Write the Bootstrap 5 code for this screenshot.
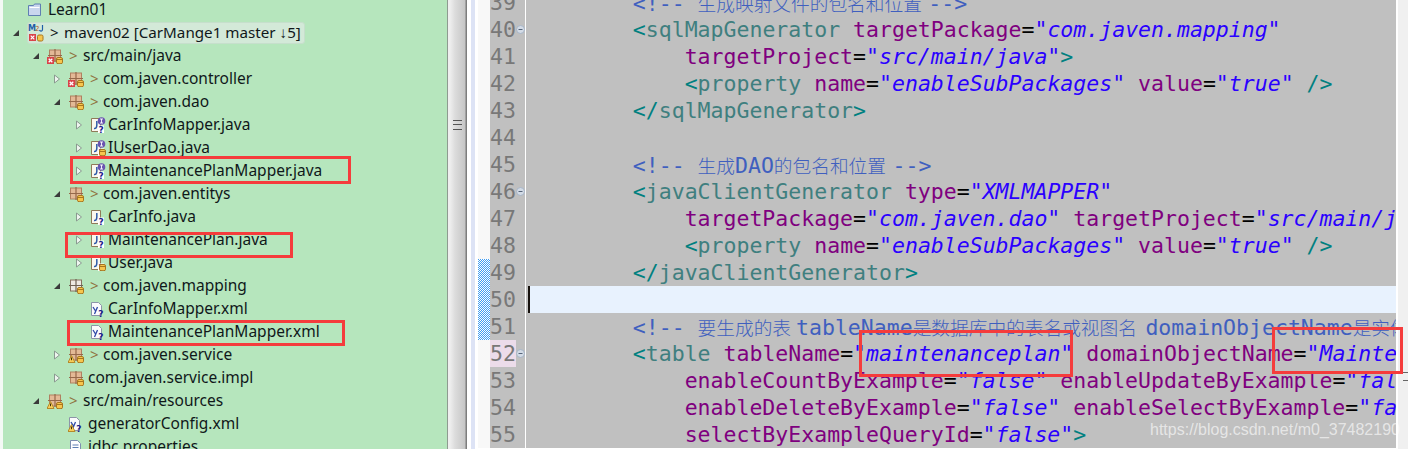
<!DOCTYPE html>
<html lang="en"><head><meta charset="utf-8"><title>Eclipse</title>
<link href="https://cdn.jsdelivr.net/npm/bootstrap@5.3.0/dist/css/bootstrap.min.css" rel="stylesheet">
<style>
html,body{height:449px;overflow:hidden;background:#fff}
.stage{width:1408px;height:449px;overflow:hidden;position:relative}
.tree{width:447px;height:449px;background:#b6e6bd;border-left:3px solid #f4f9f5;overflow:hidden;flex:none;font:15.5px/23px "Noto Sans","Open Sans",sans-serif;color:#10181a}
.tree-in{margin-top:-2px}
.trow{height:23px;white-space:nowrap}
.l1{padding-left:9px}.l2{padding-left:29px}.l3{padding-left:50px}.l4{padding-left:72px}
.arw{width:15px;flex:none;height:23px}
.ico{width:16px;height:16px;flex:none}
.lbl{margin-left:4px}
.l1 .lbl{margin-left:5px}
.l4 .lbl{margin-left:2px}
.dec+.lbl{margin-left:0}
.l2 .dec+.lbl{margin-left:1px}
.dec{color:#8f7340;width:13px;margin-left:6px;flex:none;font-size:15px}
.hl{background:#d3e9d8;border:1px solid #c6dfcc;border-radius:3px;height:22px;padding-right:3px;font-size:15.2px}
.hl .dec{color:#10181a;margin-left:5px;width:14px}
.split{width:20px;flex:none;background:linear-gradient(90deg,#8e9a90 0 1px,#eeeeee 1px 3px,#dcdcdc 8px,#c6c6c6 18px,#7d7d7d 19px);position:relative}
.grip{position:absolute;left:6px;top:120px;width:9px;height:10px;border-top:1px solid #555;border-bottom:1px solid #555}
.grip::after{content:"";position:absolute;left:0;right:0;top:3px;height:2px;border-top:1px solid #555}
.ruler{width:11px;flex:none;background:linear-gradient(90deg,#fff 0 4px,#dde3f5 4px 8px,#fff 8px)}
.lines{margin-top:-11px;width:918px;flex:none;font:21.52px/27px "DejaVu Sans Mono",monospace}
.lrow{height:27px}
.dif{width:12px;flex:none;background:#f8f8f8}
.dif svg{display:block}
.lnum{width:26px;flex:none;background:#c0c0c0;color:#787878;text-align:right;padding-right:1px}
.lnum.bp{background:#ecdcea}
.fold{width:9px;flex:none;background:#c0c0c0;padding-top:9px}
.fold svg{display:block}
.code{flex:1 1 auto;min-width:0;background:#c0c0c0;border-left:1px solid #fff;padding-left:2px;overflow:hidden}
.txt{height:27px;padding-left:1.2px;white-space:pre}
.txt.cur{background:#e8f2fe;border-left:2px solid #15100c}
.t{color:#3f7f7f}.b{color:#008080}.a{color:#7f007f}.v{color:#2a00ff;font-style:italic}.e{color:#000}.c{color:#3f5fbf}
.z{font-family:"Noto Sans CJK SC",sans-serif;font-size:18.7px;font-weight:300}
.sp{display:inline-block;width:6.5px}
.sp5{display:inline-block;width:5px}
.sp8{display:inline-block;width:8.5px}
.bar{width:12px;flex:none;background:linear-gradient(90deg,#fff 0 2px,#f0f0f0 2px);position:relative}
.rgrip{position:absolute;right:0;top:372px;width:5px;height:9px;border-top:1px solid #666;border-bottom:1px solid #666}
.rbox{position:absolute;border:3px solid #f53c3c}
.wm{position:absolute;left:1150px;top:420px;font:16px/20px "Liberation Sans",sans-serif;color:rgba(255,255,255,.62);white-space:nowrap}
</style></head><body>
<svg width="0" height="0" class="d-block" aria-hidden="true"><defs>
<pattern id="chk" width="2" height="2" patternUnits="userSpaceOnUse"><rect width="2" height="2" fill="#fff"/><rect width="1" height="1" fill="#3f9cf2"/><rect x="1" y="1" width="1" height="1" fill="#3f9cf2"/></pattern>
<pattern id="chk2" width="2" height="2" patternUnits="userSpaceOnUse"><rect width="2" height="2" fill="#fff"/><rect x="1" width="1" height="1" fill="#3f9cf2"/><rect y="1" width="1" height="1" fill="#3f9cf2"/></pattern>
<symbol id="aopen" viewBox="0 0 8 8"><path d="M1 7H7V1Z" fill="#3a3a3a"/></symbol>
<symbol id="aclosed" viewBox="0 0 8 10"><path d="M1.5 1L6.5 5L1.5 9Z" fill="#eef5ef" stroke="#8a9a90"/></symbol>
<symbol id="folder" viewBox="0 0 16 16"><path d="M1.5 3.5H6.5L7.5 2H13.5V13.5H1.5Z" fill="#c9d6ee" stroke="#5f7fb2"/><path d="M2.5 5.5H12.5" stroke="#fff"/></symbol>
<symbol id="pk" viewBox="0 0 16 16"><rect x="2.5" y="2" width="11" height="11" fill="#e3b996" stroke="#b08060"/><path d="M8 1V14M1 7.5H15" stroke="#96684a" stroke-width="1.2"/></symbol>
<symbol id="pkw" viewBox="0 0 16 16"><rect x="2.5" y="2" width="11" height="11" fill="#eee9e2" stroke="#85715f"/><path d="M8 1V14M1 7.5H15" stroke="#706255" stroke-width="1.2"/></symbol>
<symbol id="jar" viewBox="0 0 16 16"><rect x="9.5" y="9.5" width="6" height="6.2" rx="1.5" fill="#f6c64e" stroke="#a8761d"/><path d="M10 11.5H15" stroke="#a8761d"/></symbol>
<symbol id="xx" viewBox="0 0 16 16"><rect x="0" y="9" width="7" height="7" fill="#d9434a"/><path d="M1.7 10.7L5.3 14.3M5.3 10.7L1.7 14.3" stroke="#fff" stroke-width="1.3"/></symbol>
<symbol id="warn" viewBox="0 0 16 16"><path d="M3.5 8.5L7 15.5H0Z" fill="#f7cd5a" stroke="#b58a2a"/><path d="M3.5 10.5V13.2" stroke="#40300a"/></symbol>
<symbol id="jf" viewBox="0 0 16 16"><path d="M1.5 1.5H10.5V14.5H1.5Z" fill="#fbf8ef" stroke="#8f7a58"/><path d="M6.8 4C7 9 7 12 4 11.5" fill="none" stroke="#2e5aa8" stroke-width="1.5"/><rect x="8" y="8.5" width="6" height="7.5" fill="#fff"/><text x="8.4" y="15.5" font-size="9" font-weight="700" font-family="DejaVu Sans" fill="#1d1d8c">?</text></symbol>
<symbol id="inf" viewBox="0 0 16 16"><circle cx="11.5" cy="4" r="3.8" fill="#6a55b0"/><path d="M11.5 2V6M10 2H13M10 6H13" stroke="#fff" stroke-width=".9"/></symbol>
<symbol id="xf" viewBox="0 0 16 16"><path d="M1.5 1.5H8.5L11.5 4.5V14.5H1.5Z" fill="#fbfbfd" stroke="#8c94a8"/><path d="M3 6L5.5 10M7.5 6L4.5 13" fill="none" stroke="#2e4aa8" stroke-width="1.3"/><text x="8.2" y="15.5" font-size="9" font-weight="700" font-family="DejaVu Sans" fill="#1d1d8c">?</text></symbol>
<symbol id="mav" viewBox="0 0 17 18"><text x="0" y="7" font-size="8" font-weight="700" font-family="DejaVu Sans" fill="#1f5fa8">M</text><text x="7" y="7" font-size="7" font-family="DejaVu Sans" fill="#b05a2a">2</text><path d="M14.5 1V5.5C14.5 7.5 12 7.5 11.5 6" fill="none" stroke="#1f5fa8" stroke-width="1.2"/><rect x="1" y="10" width="7" height="7" fill="#d9434a"/><path d="M2.7 11.7L6.3 15.3M6.3 11.7L2.7 15.3" stroke="#fff" stroke-width="1.2"/><rect x="9.5" y="11" width="5.5" height="6" rx="1.4" fill="#f6c64e" stroke="#a8761d"/></symbol>
<symbol id="prop" viewBox="0 0 16 16"><path d="M2.5 1.5H9.5L12.5 4.5V14.5H2.5Z" fill="#fff" stroke="#7d8fb0"/><path d="M4.5 6H10.5M4.5 8.5H10.5M4.5 11H10.5" stroke="#5f7fb2"/></symbol>
<symbol id="fd" viewBox="0 0 9 9"><circle cx="4.5" cy="4.5" r="4" fill="#d3dbe6" stroke="#a7b4c6"/><path d="M2.5 4.5H6.5" stroke="#56657a"/></symbol>
</defs></svg>
<div class="stage d-flex">
<nav class="tree"><div class="tree-in">
<div class="trow d-flex align-items-center l1"><span class="arw"></span><svg class="ico"><use href="#folder"/></svg><span class="lbl">Learn01</span></div>
<div class="trow d-flex align-items-center l1"><span class="arw d-flex align-items-center"><svg width="8" height="8"><use href="#aopen"/></svg></span><span class="hl d-flex align-items-center"><svg width="17" height="18" class="flex-shrink-0"><use href="#mav"/></svg><span class="dec">&gt;</span>maven02 [CarMange1 master ↓5]</span></div>
<div class="trow d-flex align-items-center l2"><span class="arw d-flex align-items-center"><svg width="8" height="8"><use href="#aopen"/></svg></span><svg class="ico"><use href="#pk"/><use href="#xx"/><use href="#jar"/></svg><span class="dec">&gt;</span><span class="lbl">src/main/java</span></div>
<div class="trow d-flex align-items-center l3"><span class="arw d-flex align-items-center"><svg width="8" height="10"><use href="#aclosed"/></svg></span><svg class="ico"><use href="#pk"/><use href="#xx"/><use href="#jar"/></svg><span class="dec">&gt;</span><span class="lbl">com.javen.controller</span></div>
<div class="trow d-flex align-items-center l3"><span class="arw d-flex align-items-center"><svg width="8" height="8"><use href="#aopen"/></svg></span><svg class="ico"><use href="#pk"/><use href="#jar"/></svg><span class="dec">&gt;</span><span class="lbl">com.javen.dao</span></div>
<div class="trow d-flex align-items-center l4"><span class="arw d-flex align-items-center"><svg width="8" height="10"><use href="#aclosed"/></svg></span><svg class="ico"><use href="#jf"/><use href="#inf"/></svg><span class="lbl">CarInfoMapper.java</span></div>
<div class="trow d-flex align-items-center l4"><span class="arw d-flex align-items-center"><svg width="8" height="10"><use href="#aclosed"/></svg></span><svg class="ico"><use href="#jf"/><use href="#inf"/><use href="#jar"/></svg><span class="lbl">IUserDao.java</span></div>
<div class="trow d-flex align-items-center l4"><span class="arw d-flex align-items-center"><svg width="8" height="10"><use href="#aclosed"/></svg></span><svg class="ico"><use href="#jf"/><use href="#inf"/></svg><span class="lbl">MaintenancePlanMapper.java</span></div>
<div class="trow d-flex align-items-center l3"><span class="arw d-flex align-items-center"><svg width="8" height="8"><use href="#aopen"/></svg></span><svg class="ico"><use href="#pk"/><use href="#jar"/></svg><span class="dec">&gt;</span><span class="lbl">com.javen.entitys</span></div>
<div class="trow d-flex align-items-center l4"><span class="arw d-flex align-items-center"><svg width="8" height="10"><use href="#aclosed"/></svg></span><svg class="ico"><use href="#jf"/></svg><span class="lbl">CarInfo.java</span></div>
<div class="trow d-flex align-items-center l4"><span class="arw d-flex align-items-center"><svg width="8" height="10"><use href="#aclosed"/></svg></span><svg class="ico"><use href="#jf"/></svg><span class="lbl">MaintenancePlan.java</span></div>
<div class="trow d-flex align-items-center l4"><span class="arw d-flex align-items-center"><svg width="8" height="10"><use href="#aclosed"/></svg></span><svg class="ico"><use href="#jf"/><use href="#jar"/></svg><span class="lbl">User.java</span></div>
<div class="trow d-flex align-items-center l3"><span class="arw d-flex align-items-center"><svg width="8" height="8"><use href="#aopen"/></svg></span><svg class="ico"><use href="#pkw"/><use href="#jar"/></svg><span class="dec">&gt;</span><span class="lbl">com.javen.mapping</span></div>
<div class="trow d-flex align-items-center l4"><span class="arw"></span><svg class="ico"><use href="#xf"/></svg><span class="lbl">CarInfoMapper.xml</span></div>
<div class="trow d-flex align-items-center l4"><span class="arw"></span><svg class="ico"><use href="#xf"/></svg><span class="lbl">MaintenancePlanMapper.xml</span></div>
<div class="trow d-flex align-items-center l3"><span class="arw d-flex align-items-center"><svg width="8" height="10"><use href="#aclosed"/></svg></span><svg class="ico"><use href="#pk"/><use href="#warn"/><use href="#jar"/></svg><span class="dec">&gt;</span><span class="lbl">com.javen.service</span></div>
<div class="trow d-flex align-items-center l3"><span class="arw d-flex align-items-center"><svg width="8" height="10"><use href="#aclosed"/></svg></span><svg class="ico"><use href="#pk"/><use href="#jar"/></svg><span class="lbl">com.javen.service.impl</span></div>
<div class="trow d-flex align-items-center l2"><span class="arw d-flex align-items-center"><svg width="8" height="8"><use href="#aopen"/></svg></span><svg class="ico"><use href="#pk"/><use href="#warn"/><use href="#jar"/></svg><span class="dec">&gt;</span><span class="lbl">src/main/resources</span></div>
<div class="trow d-flex align-items-center l3"><span class="arw"></span><svg class="ico"><use href="#xf"/><use href="#warn"/></svg><span class="lbl">generatorConfig.xml</span></div>
<div class="trow d-flex align-items-center l3"><span class="arw"></span><svg class="ico"><use href="#prop"/></svg><span class="lbl">jdbc.properties</span></div>
</div></nav>
<div class="split"><span class="grip"></span></div>
<div class="ruler"></div>
<main class="lines">
<div class="lrow d-flex"><div class="dif"></div><div class="lnum">39</div><div class="fold"></div><div class="code"><div class="txt">        <span class="c">&lt;!-- <span class="z">生成映射文件的包名和位置</span><span class="sp"></span>--&gt;</span></div></div></div>
<div class="lrow d-flex"><div class="dif"></div><div class="lnum">40</div><div class="fold"><svg width="9" height="9"><use href="#fd"/></svg></div><div class="code"><div class="txt">        <span class="b">&lt;</span><span class="t">sqlMapGenerator</span> <span class="a">targetPackage</span><span class="e">=</span><span class="v">"com.javen.mapping"</span></div></div></div>
<div class="lrow d-flex"><div class="dif"></div><div class="lnum">41</div><div class="fold"></div><div class="code"><div class="txt">            <span class="a">targetProject</span><span class="e">=</span><span class="v">"src/main/java"</span><span class="b">&gt;</span></div></div></div>
<div class="lrow d-flex"><div class="dif"></div><div class="lnum">42</div><div class="fold"></div><div class="code"><div class="txt">            <span class="b">&lt;</span><span class="t">property</span> <span class="a">name</span><span class="e">=</span><span class="v">"enableSubPackages"</span> <span class="a">value</span><span class="e">=</span><span class="v">"true"</span> <span class="b">/&gt;</span></div></div></div>
<div class="lrow d-flex"><div class="dif"></div><div class="lnum">43</div><div class="fold"></div><div class="code"><div class="txt">        <span class="b">&lt;/</span><span class="t">sqlMapGenerator</span><span class="b">&gt;</span></div></div></div>
<div class="lrow d-flex"><div class="dif"></div><div class="lnum">44</div><div class="fold"></div><div class="code"><div class="txt"> </div></div></div>
<div class="lrow d-flex"><div class="dif"></div><div class="lnum">45</div><div class="fold"></div><div class="code"><div class="txt">        <span class="c">&lt;!-- <span class="z">生成</span>DAO<span class="z">的包名和位置</span><span class="sp"></span>--&gt;</span></div></div></div>
<div class="lrow d-flex"><div class="dif"></div><div class="lnum">46</div><div class="fold"><svg width="9" height="9"><use href="#fd"/></svg></div><div class="code"><div class="txt">        <span class="b">&lt;</span><span class="t">javaClientGenerator</span> <span class="a">type</span><span class="e">=</span><span class="v">"XMLMAPPER"</span></div></div></div>
<div class="lrow d-flex"><div class="dif"></div><div class="lnum">47</div><div class="fold"></div><div class="code"><div class="txt">            <span class="a">targetPackage</span><span class="e">=</span><span class="v">"com.javen.dao"</span> <span class="a">targetProject</span><span class="e">=</span><span class="v">"src/main/java"</span></div></div></div>
<div class="lrow d-flex"><div class="dif"></div><div class="lnum">48</div><div class="fold"></div><div class="code"><div class="txt">            <span class="b">&lt;</span><span class="t">property</span> <span class="a">name</span><span class="e">=</span><span class="v">"enableSubPackages"</span> <span class="a">value</span><span class="e">=</span><span class="v">"true"</span> <span class="b">/&gt;</span></div></div></div>
<div class="lrow d-flex"><div class="dif"><svg width="12" height="27"><rect width="12" height="27" fill="url(#chk)"/></svg></div><div class="lnum">49</div><div class="fold"></div><div class="code"><div class="txt">        <span class="b">&lt;/</span><span class="t">javaClientGenerator</span><span class="b">&gt;</span></div></div></div>
<div class="lrow d-flex"><div class="dif"><svg width="12" height="27"><rect width="12" height="27" fill="url(#chk2)"/></svg></div><div class="lnum">50</div><div class="fold"></div><div class="code"><div class="txt cur"> </div></div></div>
<div class="lrow d-flex"><div class="dif"><svg width="12" height="27"><rect width="12" height="27" fill="url(#chk)"/></svg></div><div class="lnum">51</div><div class="fold"></div><div class="code"><div class="txt">        <span class="c">&lt;!-- <span class="z">要生成的表</span><span class="sp5"></span>tableName<span class="z">是数据库中的表名或视图名</span><span class="sp8"></span>domainObjectName<span class="z">是实体类名</span></span></div></div></div>
<div class="lrow d-flex"><div class="dif"></div><div class="lnum bp">52</div><div class="fold"><svg width="9" height="9"><use href="#fd"/></svg></div><div class="code"><div class="txt">        <span class="b">&lt;</span><span class="t">table</span> <span class="a">tableName</span><span class="e">=</span><span class="v">"maintenanceplan"</span> <span class="a">domainObjectName</span><span class="e">=</span><span class="v">"MaintenancePlan"</span></div></div></div>
<div class="lrow d-flex"><div class="dif"></div><div class="lnum">53</div><div class="fold"></div><div class="code"><div class="txt">            <span class="a">enableCountByExample</span><span class="e">=</span><span class="v">"false"</span> <span class="a">enableUpdateByExample</span><span class="e">=</span><span class="v">"false"</span></div></div></div>
<div class="lrow d-flex"><div class="dif"></div><div class="lnum">54</div><div class="fold"></div><div class="code"><div class="txt">            <span class="a">enableDeleteByExample</span><span class="e">=</span><span class="v">"false"</span> <span class="a">enableSelectByExample</span><span class="e">=</span><span class="v">"false"</span></div></div></div>
<div class="lrow d-flex"><div class="dif"></div><div class="lnum">55</div><div class="fold"></div><div class="code"><div class="txt">            <span class="a">selectByExampleQueryId</span><span class="e">=</span><span class="v">"false"</span><span class="b">&gt;</span></div></div></div>
</main>
<div class="bar"><span class="rgrip"></span></div>
<div class="rbox" style="left:70px;top:156px;width:281px;height:28px"></div>
<div class="rbox" style="left:65px;top:232px;width:228px;height:26px"></div>
<div class="rbox" style="left:67px;top:320px;width:278px;height:26px"></div>
<div class="rbox" style="left:859px;top:330px;width:214px;height:47px"></div>
<div class="rbox" style="left:1272px;top:327px;width:131px;height:47px"></div>
<div class="wm">https://blog.csdn.net/m0_37482190</div>
</div>
<script src="https://cdn.jsdelivr.net/npm/bootstrap@5.3.0/dist/js/bootstrap.bundle.min.js"></script>
</body></html>
